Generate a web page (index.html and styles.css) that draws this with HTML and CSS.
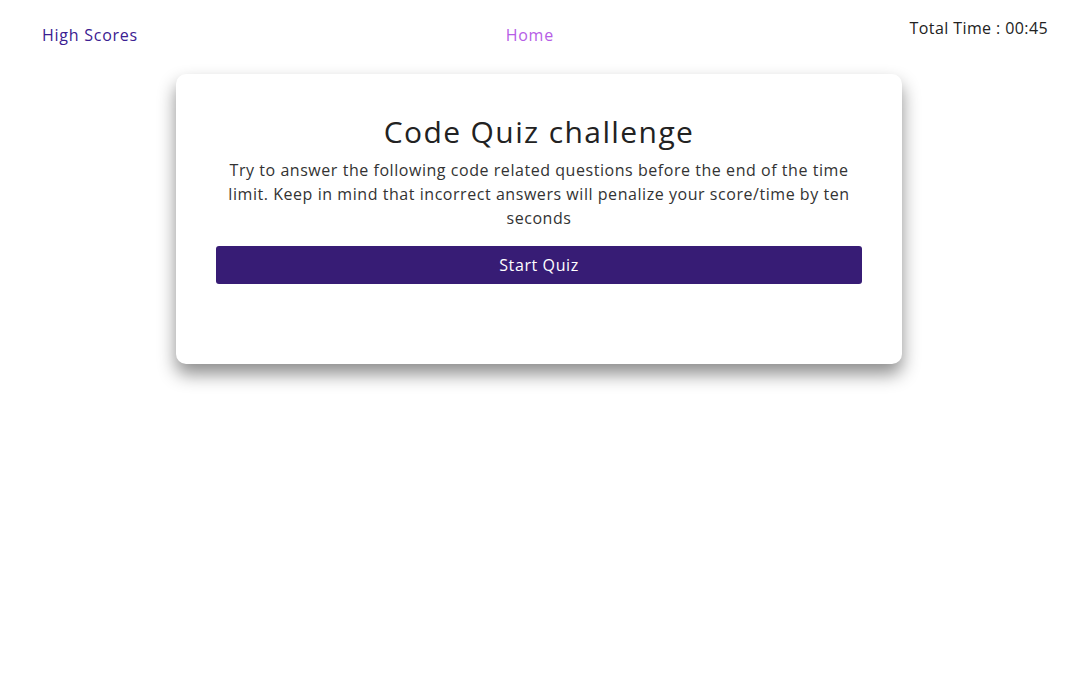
FILE: index.html
```html
<!DOCTYPE html>
<html lang="en">
<head>
<meta charset="utf-8">
<title>Code Quiz</title>
<link rel="stylesheet" href="styles.css">
</head>
<body>
<header class="topbar">
  <a class="nav-link scores" href="#">High Scores</a>
  <a class="nav-link home" href="#">Home</a>
  <div class="timer">Total Time : 00:45</div>
</header>
<main class="stage">
  <section class="card">
    <h1 class="card-title">Code Quiz challenge</h1>
    <p class="card-text">Try to answer the following code related questions before the end of the time limit. Keep in mind that incorrect answers will penalize your score/time by ten seconds</p>
    <button class="start-btn" type="button">Start Quiz</button>
  </section>
</main>
</body>
</html>
```
FILE: styles.css
```css
* { box-sizing: border-box; }
html, body { margin: 0; padding: 0; background: #fff; }
body {
  font-family: "Open Sans", "DejaVu Sans", sans-serif;
  color: #222;
  font-size: 16px;
  min-height: 100vh;
}
.topbar {
  display: flex;
  justify-content: space-between;
  align-items: flex-start;
  padding: 18px 26px 0 42px;
  height: 74px;
}
.nav-link {
  text-decoration: none;
  font-size: 16px;
  line-height: 20px;
  margin-top: 7px;
  letter-spacing: 0.75px;
}
.scores { color: #3b2091; }
.home { color: #b65de6; margin-left: 12px; }
.timer {
  font-size: 16px;
  line-height: 20px;
  color: #222;
  letter-spacing: 0.4px;
}
.stage {
  display: flex;
  justify-content: center;
  padding: 0 0 60px 4px;
}
.card {
  width: 726px;
  height: 290px;
  background: #fff;
  border-radius: 10px;
  box-shadow: 0 10px 18px rgba(0, 0, 0, 0.45);
  padding: 39px 40px 40px;
  display: flex;
  flex-direction: column;
  align-items: stretch;
  text-align: center;
}
.card-title {
  margin: 0;
  font-size: 30px;
  font-weight: 400;
  line-height: 38px;
  color: #222;
  letter-spacing: 1.4px;
}
.card-text {
  margin: 7px 0 0;
  font-size: 16px;
  line-height: 24px;
  color: #333;
  letter-spacing: 0.55px;
}
.start-btn {
  margin-top: 16px;
  height: 38px;
  border: none;
  border-radius: 3px;
  background: #371c75;
  color: #fff;
  font-family: inherit;
  font-size: 16px;
  letter-spacing: 0.6px;
  cursor: pointer;
}
```
